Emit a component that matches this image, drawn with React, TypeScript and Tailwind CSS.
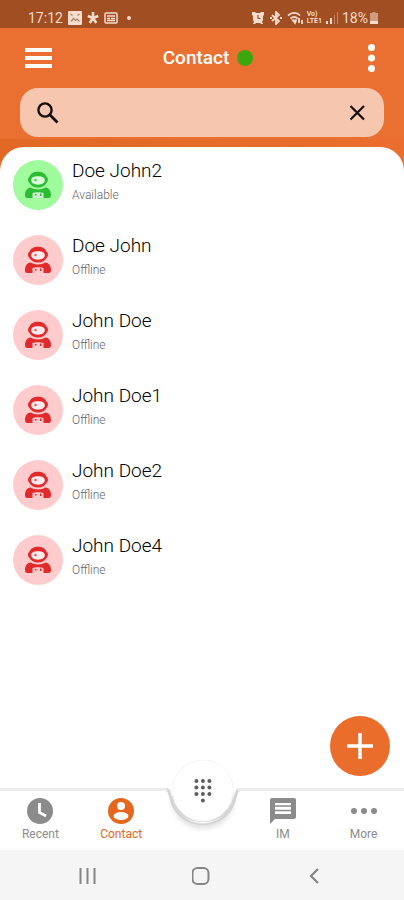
import React from 'react';

interface Contact {
  name: string;
  status: 'Available' | 'Offline';
}

const CONTACTS: Contact[] = [
  { name: 'Doe John2', status: 'Available' },
  { name: 'Doe John', status: 'Offline' },
  { name: 'John Doe', status: 'Offline' },
  { name: 'John Doe1', status: 'Offline' },
  { name: 'John Doe2', status: 'Offline' },
  { name: 'John Doe4', status: 'Offline' },
];

const StatusBar: React.FC = () => (
  <div className="flex h-7 items-center justify-between bg-[#a04e22] pl-7 pr-[26px] pt-2 text-sm text-[#f6dccd]">
    <div className="flex items-center gap-[5px]">
      <span>17:12</span>
      {/* Gallery */}
      <svg className="h-3.5 w-3.5" viewBox="0 0 14 14">
        <rect width="14" height="14" rx="1" fill="currentColor" />
        <path d="M2.5 3l2 1.5M11.5 3l-2 1.5M3 10.5l2.5-3 2 2 1.5-1.500 2.500 2.500" stroke="#a98570" strokeWidth="1.200" fill="none" />
      </svg>
      <svg className="h-3.5 w-3" viewBox="0 0 12 14" stroke="currentColor" strokeWidth="2.500">
        <path d="M6 1v6M6 7L.8 5M6 7l5.200-2M6 7l-3.300 5M6 7l3.300 5" />
      </svg>
      <svg className="h-3.5 w-3.5" viewBox="0 0 14 14" fill="none" stroke="currentColor" strokeWidth="1.500">
        <rect x="1" y="2" width="12" height="10" rx="1" />
        <path d="M3 5h8M3 7.500h3M7 7.500h4M3 9.500h8" />
      </svg>
      <span className="ml-1 h-1 w-1 rounded-full bg-[#f6dccd]" />
    </div>
    <div className="flex items-center gap-1">
      {/* Alarm */}
      <svg className="h-3.5 w-3.5" viewBox="0 0 14 14">
        <path d="M1 1h3l1 1h4l1-1h3v3l-1 1v4l-1 2 1 2h-2l-1-1H5l-1 1H2l1-2-1-2V5L1 4z" fill="currentColor" />
        <path d="M7 4v3.500h2.500" fill="none" stroke="#a04e22" strokeWidth="1.200" />
      </svg>
      {/* Bluetooth */}
      <svg className="h-3.5 w-3.5" viewBox="0 0 14 14" fill="none" stroke="currentColor" strokeWidth="1.800">
        <path d="M3 4l7 6-3 3V1l3 3-7 6" />
        <path d="M1 7h2M11 7h2" />
      </svg>
      {/* Wifi */}
      <svg className="h-3.5 w-4" viewBox="0 0 16 14" fill="none" stroke="currentColor" strokeWidth="1.800">
        <path d="M1 4.500c4-3.500 9-3.500 12 0M3.500 7.500c2.500-2 5-2 7 0" />
        <path d="M6 9.500l2 2.500 1-2.500zM12 7v5M15 9v4" />
      </svg>
      <span className="flex flex-col text-[7px] font-bold leading-[7px]">
        <span>Vo)</span>
        <span>LTE1</span>
      </span>
      <svg className="h-3.5 w-3" viewBox="0 0 12 14" fill="currentColor">
        <path d="M0 10h2v3H0zM4 7h2v6H4z" />
        <path d="M8 4h1v9H8zM11 1h1v12h-1z" opacity=".4" />
      </svg>
      <div className="flex items-center gap-0.5">
        <span>18%</span>
        <svg className="h-3.5 w-2" viewBox="0 0 8 14" fill="currentColor">
          <path d="M2.500 1h3v1H8v8H0V2h2.500z" opacity=".55" />
          <path d="M0 10h8v3H0z" />
        </svg>
      </div>
    </div>
  </div>
);

const Header: React.FC = () => (
  <header className="bg-[#ea7031]">
    <div className="flex h-15 items-center justify-between px-6">
      <button aria-label="Menu" className="text-white">
        <svg className="h-7 w-7" viewBox="0 0 28 28" fill="currentColor">
          <path d="M1 4h28v4H1zM1 12h28v4H1zM1 20h28v4H1z" />
        </svg>
      </button>
      <div className="flex items-center gap-2">
        <h1 className="text-[19px] font-medium text-white">Contact</h1>
        <span className="h-4 w-4 rounded-full bg-[#3ba70c]" />
      </div>
      <button aria-label="Options" className="text-white">
        <svg className="h-7 w-4" viewBox="0 0 16 28" fill="currentColor">
          <circle cx="7.500" cy="3.500" r="3.500" />
          <circle cx="7.500" cy="14" r="3.500" />
          <circle cx="7.500" cy="24.500" r="3.500" />
        </svg>
      </button>
    </div>
    <div className="px-5">
      <div className="flex h-[49px] items-center rounded-[18px] bg-[#f6c6ae] px-4 text-[#151010]">
        <svg className="h-6 w-6" viewBox="0 0 24 24" fill="none" stroke="currentColor" strokeWidth="2.400">
          <circle cx="9" cy="9" r="6.600" />
          <path d="M14 14l7.500 7.500" strokeWidth="2.800" />
        </svg>
        <input type="text" aria-label="Search contacts" className="min-w-0 flex-1 bg-transparent px-3 outline-none" />
        <button aria-label="Clear search">
          <svg className="h-6 w-6" viewBox="0 0 24 24" fill="none" stroke="currentColor" strokeWidth="2.200">
            <path d="M6.500 5l13.500 13.500M20 5L6.500 18.500" />
          </svg>
        </button>
      </div>
    </div>
    <div className="mt-0.5 h-8 bg-linear-to-r from-[#e26826] to-[#ea6f2f]" />
  </header>
);

// Figure with a round helmet, coloured by the avatar that holds it
const AvatarIcon: React.FC = () => (
  <svg className="h-7 w-7" viewBox="0 0 28 28">
    <ellipse cx="14" cy="9.500" rx="7.500" ry="5" fill="#fff" opacity=".6" />
    <path
      fill="currentColor"
      fillRule="evenodd"
      d="M14 .8c-4.500 0-7.500 2-8.600 5-1.800 1-1.800 5 0 6 1.300 3 4.600 4.700 8.600 4.700s7.300-1.700 8.600-4.700c1.800-1 1.800-5 0-6-1.100-3-4.100-5-8.600-5zM14 5.200c4.500 0 6.800 1.300 6.800 4.100s-2.800 4.400-6.800 4.400-6.800-1.600-6.800-4.400 2.300-4.100 6.800-4.100z"
    />
    <circle cx="11.500" cy="9" r="1.200" fill="currentColor" opacity=".8" />
    <path
      fill="currentColor"
      d="M6.500 16.500c4 2.600 11 2.600 15 0 3.600.4 5.500 3.500 5.500 7.500 0 2-.7 3-2.500 3h-21C1.700 27 1 26 1 24c0-4 1.900-7.100 5.500-7.500z"
    />
    <path d="M8.500 22c3-1 8-1 11 0v5h-11z" fill="#fff" opacity=".75" />
    <path d="M11 23h1.500v1.500H11zM16 22.500h1.500V25H16z" fill="currentColor" />
  </svg>
);

const ContactRow: React.FC<{ contact: Contact }> = ({ contact }) => {
  const online = contact.status === 'Available';

  return (
    <li className="flex h-[75px] items-center gap-[9px] px-[13px]">
      <div
        className={
          online
            ? 'flex h-[50px] w-[50px] shrink-0 items-center justify-center rounded-full bg-[#a0fb9d] text-[#2dbd35]'
            : 'flex h-[50px] w-[50px] shrink-0 items-center justify-center rounded-full bg-[#ffcccd] text-[#e12a2c]'
        }
      >
        <AvatarIcon />
      </div>
      <div className="min-w-0 pb-1">
        <p className="text-[19px] font-light leading-6 text-black">{contact.name}</p>
        <p className="text-xs font-light leading-6 text-[#666666]">{contact.status}</p>
      </div>
    </li>
  );
};

interface NavItemProps {
  label: string;
  active?: boolean;
  children: React.ReactNode;
}

const NavItem: React.FC<NavItemProps> = ({ label, active, children }) => (
  <a
    href="#"
    className={
      active
        ? 'flex flex-col items-center border-t-3 border-[#ececec] pt-1.5 text-[#e5671e]'
        : 'flex flex-col items-center border-t-3 border-[#ececec] pt-1.5 text-[#8b8b8b]'
    }
  >
    <svg className="h-7 w-7" viewBox="0 0 28 28" fill="currentColor">
      {children}
    </svg>
    <span className="text-xs leading-[18px]">{label}</span>
  </a>
);

const DialPadButton: React.FC = () => (
  <button aria-label="Dial pad" className="relative">
    <svg className="absolute -top-7 left-0 h-20 w-full" viewBox="0 0 81 80" preserveAspectRatio="none">
      <defs>
        <filter id="soft" x="-20%" y="-20%" width="140%" height="140%">
          <feGaussianBlur stdDeviation="2.500" />
        </filter>
      </defs>
      <circle cx="41" cy="37" r="32" fill="#cfcfcf" opacity=".6" filter="url(#soft)" />
      <path d="M-1 0h83v28H77c-4 0-4 4-6 11-4 14-16 24-30 24S15 53 11 39c-2-7-2-11-6-11h-6z" fill="#fff" />
      <path
        d="M0 28h4c4 0 4 3 6 10 4 15 16 26 31 26s27-11 31-26c2-7 2-10 6-10h3v3h-2c-3 0-3 2-5 9-4 15-17 25-33 25S12 55 8 40c-2-7-2-9-5-9H0z"
        fill="#d3d3d3"
      />
      <path d="M0 28h4l2 3H0zM81 28h-4l-2 3h6z" fill="#ececec" />
      <path d="M10 36c2 14 13 26 31 26s29-12 31-26z" fill="#d3d3d3" />
      <circle cx="41" cy="30.500" r="30.500" fill="#fff" stroke="#f4f4f4" />
      <g fill="#5e5e5e">
        <circle cx="34.500" cy="21" r="2" />
        <circle cx="41" cy="21" r="2" />
        <circle cx="47.500" cy="21" r="2" />
        <circle cx="34.500" cy="27.500" r="2" />
        <circle cx="41" cy="27.500" r="2" />
        <circle cx="47.500" cy="27.500" r="2" />
        <circle cx="34.500" cy="34" r="2" />
        <circle cx="41" cy="34" r="2" />
        <circle cx="47.500" cy="34" r="2" />
        <circle cx="41" cy="40.500" r="2" />
      </g>
    </svg>
  </button>
);

const BottomNav: React.FC = () => (
  <nav className="grid h-[62px] grid-cols-5 bg-white">
    <NavItem label="Recent">
      <circle cx="14" cy="14" r="13" />
      <path d="M13.500 6v9.500l6.500 3.500" fill="none" stroke="#fff" strokeWidth="2.800" />
    </NavItem>
    <NavItem label="Contact" active>
      <circle cx="14" cy="14" r="13" />
      <circle cx="14" cy="9" r="4" fill="#fff" />
      <ellipse cx="14" cy="19" rx="7.500" ry="4" fill="#fff" />
    </NavItem>
    <DialPadButton />
    <NavItem label="IM">
      <path d="M3 1h22c1.200 0 2 .8 2 2v17c0 1.200-.8 2-2 2H6l-5 5V3c0-1.200.8-2 2-2z" />
      <path d="M6 6h16v11H6z" fill="#fff" />
      <path d="M6 9h16M6 13.500h16" stroke="currentColor" strokeWidth="1.500" />
    </NavItem>
    <NavItem label="More">
      <circle cx="4" cy="14" r="3" />
      <circle cx="14" cy="14" r="3" />
      <circle cx="24" cy="14" r="3" />
    </NavItem>
  </nav>
);

const SystemBar: React.FC = () => (
  <div className="flex h-[50px] items-center justify-between bg-[#f5f5f5] px-[77px] pt-0.5 text-[#858585]">
    <button aria-label="Recent apps">
      <svg className="h-5 w-5" viewBox="0 0 20 20" stroke="currentColor" strokeWidth="2">
        <path d="M3.500 2v16M10.500 2v16M17.500 2v16" />
      </svg>
    </button>
    <button aria-label="Home">
      <svg className="h-5 w-5" viewBox="0 0 20 20" fill="none" stroke="currentColor" strokeWidth="2">
        <rect x="0.500" y="2" width="16" height="16" rx="5" />
      </svg>
    </button>
    <button aria-label="Back">
      <svg className="h-5 w-5" viewBox="0 0 20 20" fill="none" stroke="currentColor" strokeWidth="2.200">
        <path d="M11 3L4 10l7 7" />
      </svg>
    </button>
  </div>
);

const App: React.FC = () => (
  <div className="flex min-h-screen flex-col bg-white font-['Roboto',sans-serif]">
    <StatusBar />
    <Header />

    <main className="-mt-6 flex flex-1 flex-col rounded-t-[24px] bg-white">
      <ul>
        {CONTACTS.map((contact) => (
          <ContactRow key={contact.name} contact={contact} />
        ))}
      </ul>
      <button
        aria-label="Add contact"
        className="mb-3 mr-3.5 mt-auto flex h-15 w-15 items-center justify-center self-end rounded-full bg-[#ea6d2c] text-white"
      >
        <svg className="h-7 w-7" viewBox="0 0 28 28" stroke="currentColor" strokeWidth="3.500">
          <path d="M14 1v26M1 14h26" />
        </svg>
      </button>
    </main>

    <BottomNav />
    <SystemBar />
  </div>
);

export default App;
